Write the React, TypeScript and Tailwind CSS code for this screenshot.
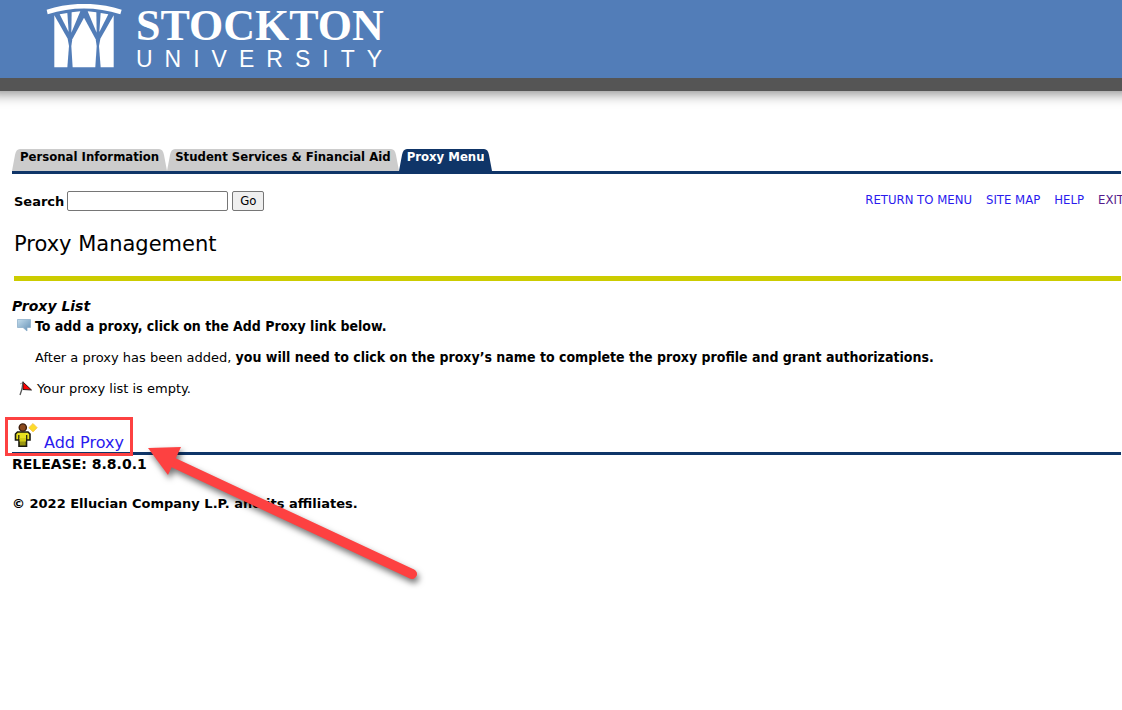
import React from 'react';

interface TabProps {
  label: string;
  active?: boolean;
}

const tabs: TabProps[] = [
  { label: 'Personal Information' },
  { label: 'Student Services & Financial Aid' },
  { label: 'Proxy Menu', active: true },
];

const links = ['RETURN TO MENU', 'SITE MAP', 'HELP'];

const Logo = () => (
  <svg width="76" height="66" viewBox="6 6 228 198" fill="#fff" aria-hidden="true">
    <path d="M8 23 Q120 -12 233 23 L229 37 Q120 2 11 37Z" />
    {/* panels between the trunks */}
    <path d="M31 40 L71 110 L75 132 L70 196 H31Z" />
    <path d="M120 47 L85 112 L82 132 L86 196 H154 L158 132 L155 112Z" />
    <path d="M209 40 L169 110 L165 132 L170 196 H209Z" />
    {/* light between the branches */}
    <path d="M47 37 L70 33 L74 90Z" />
    <path d="M83 31 L109 28 L82 92Z" />
    <path d="M193 37 L170 33 L166 90Z" />
    <path d="M157 31 L131 28 L158 92Z" />
  </svg>
);

const TabEdge = ({ active, flip }: { active?: boolean; flip?: boolean }) => (
  <svg
    width="8"
    height="22"
    viewBox="0 0 8 22"
    className={`shrink-0 ${flip ? '-scale-x-100' : ''}`}
    aria-hidden="true"
  >
    <path d="M0 22 L3 6 Q4 0 8 0 V22Z" fill={active ? '#0f3568' : '#cccccc'} />
  </svg>
);

const Tab: React.FC<TabProps> = ({ label, active }) => (
  <a
    href="#"
    className={`flex h-[22px] items-stretch text-[13px] leading-4 font-bold whitespace-nowrap ${
      active ? 'text-white' : 'text-black'
    }`}
  >
    <TabEdge active={active} />
    <span className={active ? 'bg-[#0f3568]' : 'bg-[#cccccc]'}>{label}</span>
    <TabEdge active={active} flip />
  </a>
);

const CommentIcon = () => (
  <svg width="14" height="13" viewBox="0 0 14 13" className="shrink-0" aria-hidden="true">
    <defs>
      <linearGradient id="bubble" x1="0" y1="0" x2="1" y2="1">
        <stop offset="0" stopColor="#c3dcec" />
        <stop offset="1" stopColor="#6390b5" />
      </linearGradient>
    </defs>
    <path d="M0.500 0.500 H13.500 V8.500 H10 V12 L6 8.500 H0.500Z" fill="url(#bubble)" stroke="#86abc7" strokeWidth="0.700" />
  </svg>
);

const FlagIcon = () => (
  <svg width="14" height="15" viewBox="0 0 14 15" className="shrink-0" aria-hidden="true">
    <path d="M4 1 L12.500 9 L4 8.500Z" fill="#f00" stroke="#111" strokeWidth="0.900" />
    <path d="M4 0.500 L3 8 L1 14" stroke="#555" strokeWidth="1.300" fill="none" />
    <path d="M1 3 L3 2" stroke="#888" strokeWidth="0.800" />
  </svg>
);

const PersonIcon = () => (
  <svg width="24" height="26" viewBox="0 0 24 26" className="shrink-0" aria-hidden="true">
    <path d="M5 14 V24.300 H12.500 V14" fill="#9a9710" stroke="#1a1a10" strokeWidth="1.600" />
    <path d="M3.500 10 H14 L16 12 V18 H1.500 V12Z" fill="#e8e020" stroke="#1a1a10" strokeWidth="1.600" />
    <path d="M4.800 13 V18 M12.700 13 V18" stroke="#1a1a10" strokeWidth="1.200" />
    <path d="M5.500 16 H12 V19.500 H5.500Z" fill="#d2cc18" />
    <circle cx="8.800" cy="5.500" r="3.600" fill="#8b4a1e" stroke="#3c1d0a" strokeWidth="1.400" />
    <path d="M19 1.500 L23.200 5.700 L19 9.900 L14.800 5.700Z" fill="#fddc2a" stroke="#f6c04a" strokeWidth="0.800" />
  </svg>
);

const Arrow = () => (
  <svg
    width="280"
    height="144"
    viewBox="0 0 280 144"
    className="pointer-events-none absolute top-[25px] left-[136px] drop-shadow-[2px_4px_3px_rgba(0,0,0,0.55)]"
    aria-hidden="true"
  >
    <path d="M24 16 L264 128" stroke="#fd4141" strokeWidth="10" strokeLinecap="round" />
    <path d="M0 2 L33 1 L20 29Z" fill="#fd4141" />
  </svg>
);

const App: React.FC = () => {
  return (
    <div className="min-h-screen overflow-x-hidden bg-white font-['DejaVu_Sans',Verdana,sans-serif] text-[13px] leading-4 text-black">
      <header className="-mx-3 border-b-[13px] border-[#555555] bg-[#527db8] px-3 shadow-[0_3px_12px_rgba(0,0,0,0.45)]">
        <div className="flex h-[78px] items-start gap-3.5 pt-1 pl-[46px] text-white">
          <Logo />
          <div>
            <div className="font-['Liberation_Serif',serif] text-[44px] leading-[44px] font-bold">STOCKTON</div>
            <div className="font-['Liberation_Sans',sans-serif] text-[23px] leading-[22px] tracking-[12px]">
              UNIVERSITY
            </div>
          </div>
        </div>
      </header>

      <main className="mr-px ml-3 pt-[58px]">
        <nav className="flex border-b-[3px] border-[#0f3568] font-['DejaVu_Sans_Condensed',Tahoma,sans-serif]">
          {tabs.map(tab => (
            <Tab key={tab.label} {...tab} />
          ))}
        </nav>

        <div className="mt-[17px] flex items-start justify-between">
          <form className="flex items-center gap-[3px] pl-0.5">
            <label htmlFor="search" className="pt-0.5 font-bold">Search</label>
            <input
              id="search"
              type="text"
              className="h-5 w-[161px] rounded-xs border border-[#767676] bg-white px-1 outline-none"
            />
            <button
              type="button"
              className="ml-px h-5 w-8 rounded-xs border border-[#767676] bg-[#efefef] font-['DejaVu_Sans_Condensed',Tahoma,sans-serif] text-[13px]"
            >
              Go
            </button>
          </form>
          <div className="-mr-[3px] flex gap-3.5 pt-px font-['DejaVu_Sans_Condensed',Tahoma,sans-serif] text-[13px] whitespace-nowrap text-[#2a1aee]">
            {links.map(link => (
              <a key={link} href="#">{link}</a>
            ))}
            <a href="#" className="text-[#551a8b]">EXIT</a>
          </div>
        </div>

        <h1 className="mt-[19px] ml-0.5 border-b-[5px] border-[#cccc00] pb-[18px] text-[21px] leading-7">
          Proxy Management
        </h1>

        <h2 className="mt-4 text-[14px] leading-[18px] font-bold italic">Proxy List</h2>
        <div className="mt-1 flex gap-1 pl-[5px]">
          <CommentIcon />
          <div className="[&_b]:font-['DejaVu_Sans_Condensed',Verdana,sans-serif] [&_b]:text-[14px] [&_b]:leading-3">
            <p><b>To add a proxy, click on the Add Proxy link below.</b></p>
            <p className="mt-[15px]">
              After a proxy has been added,{' '}
              <b>you will need to click on the proxy’s name to complete the proxy profile and grant authorizations.</b>
            </p>
          </div>
        </div>
        <div className="mt-[15px] flex gap-1 pl-[7px]">
          <FlagIcon />
          <p>Your proxy list is empty.</p>
        </div>

        <div className="relative mt-6 flex border-b-[3px] border-[#0f3568]">
          <a href="#" className="flex h-[31px] items-end gap-1.5 pl-0.5 text-[16px] leading-[18px] text-[#2a1aee]">
            <span className="self-start pt-px"><PersonIcon /></span>
            Add Proxy
          </a>
          <div className="pointer-events-none absolute -top-1 -left-[7px] h-[39px] w-32 border-[3px] border-[#fd4141]" />
          <Arrow />
        </div>

        <footer className="pt-px font-bold">
          <p className="text-[14px]">RELEASE: 8.8.0.1</p>
          <p className="mt-6">© 2022 Ellucian Company L.P. and its affiliates.</p>
        </footer>
      </main>
    </div>
  );
};

export default App;
